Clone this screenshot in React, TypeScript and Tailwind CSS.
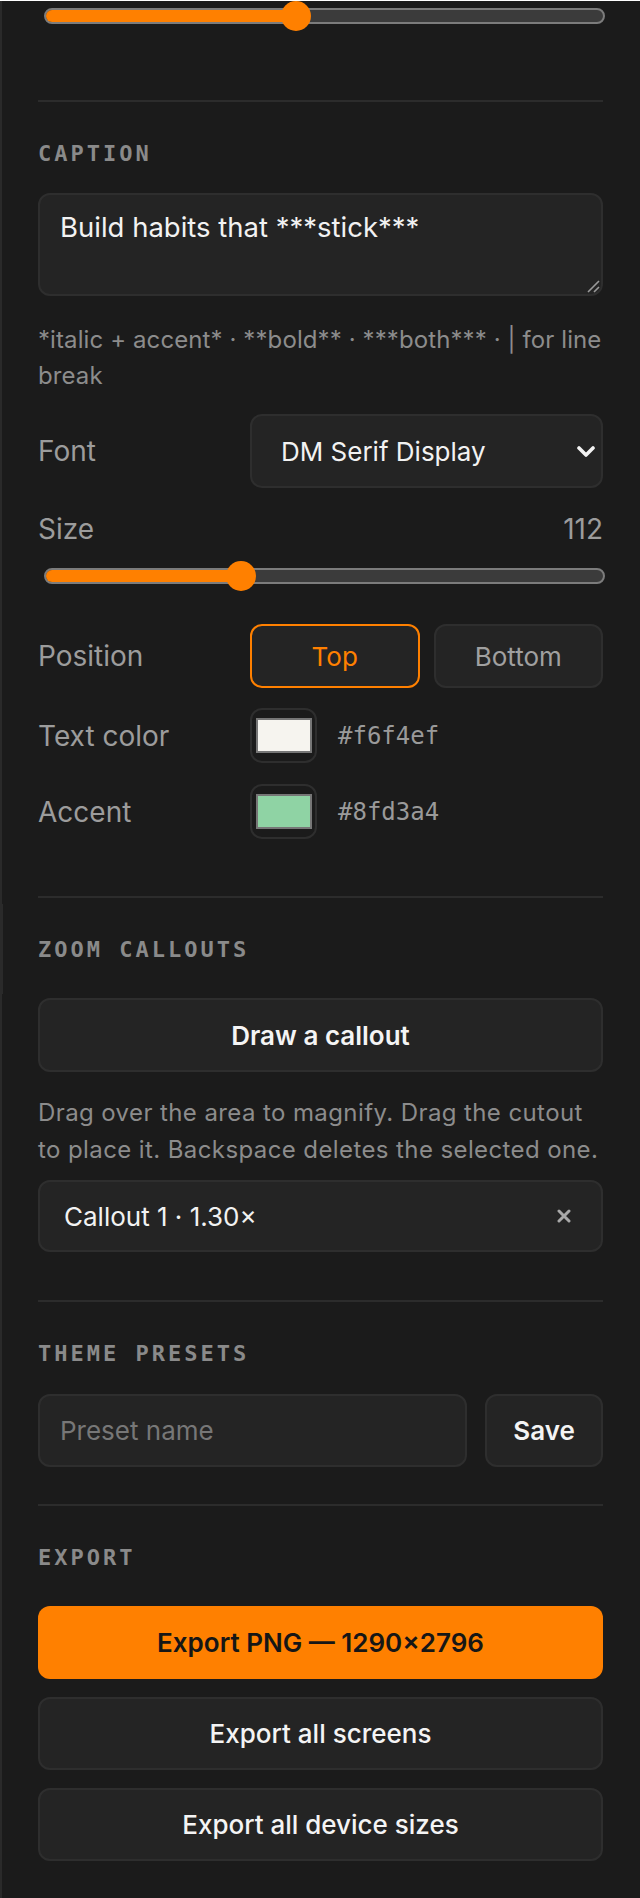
import { useState } from "react";

// Editor sidebar: caption, zoom callouts, presets and export controls
const sans = "font-['Inter','Noto_Sans',sans-serif]";
const mono = "font-['DejaVu_Sans_Mono','Liberation_Mono',monospace]";

function Divider({ className = "" }: { className?: string }) {
    return <div className={`h-[2px] bg-[#2c2c2c] ${className}`} />;
}

function SectionTitle({ children }: { children: React.ReactNode }) {
    return (
        <h3 className={`${mono} mt-[41px] text-[22px] font-bold uppercase leading-[22px] tracking-[3px] text-[#8a8a8a]`}>
            {children}
        </h3>
    );
}

function Slider({ value, min, max, className = "" }: { value: number; min: number; max: number; className?: string }) {
    // thumb is 30px, track runs 561px wide
    const frac = (value - min) / (max - min);
    const center = 15 + frac * (561 - 30);
    return (
        <div className={`relative ml-[6px] mr-[-2px] flex h-[30px] items-center ${className}`}>
            <div className="relative h-[16px] w-full overflow-hidden rounded-full border-2 border-[#7c7c7c] bg-[#3b3b3b]">
                <div className="h-full bg-[#ff8000]" style={{ width: center }} />
            </div>
            <div
                className="absolute top-0 h-[30px] w-[30px] rounded-full bg-[#ff8000]"
                style={{ left: center - 15 }}
            />
        </div>
    );
}

function Swatch({ label, color, className = "" }: { label: string; color: string; className?: string }) {
    return (
        <div className={`grid grid-cols-[212px_1fr] items-center ${className}`}>
            <span className="text-[28px] text-[#9c9c9c]">{label}</span>
            <div className="flex items-center gap-[21px]">
                <div className="h-[55px] w-[67px] rounded-[12px] border-2 border-[#2e2e2e] px-[4px] pt-[8px]">
                    <div className="h-[35px] w-[56px] border-2 border-[#767676]" style={{ background: color }} />
                </div>
                <span className={`${mono} text-[24px] text-[#9a9a9a]`}>{color}</span>
            </div>
        </div>
    );
}

export default function App() {
    const [caption, setCaption] = useState("Build habits that ***stick***");
    const [position, setPosition] = useState<"top" | "bottom">("top");
    const [presetName, setPresetName] = useState("");

    return (
        <div className={`${sans} relative min-h-[1898px] w-[640px] border-l-2 border-[#2a2a2a] bg-[#1b1b1b] pl-[36px] pr-[37px] pb-[36px]`}>
            {/* resize handle on the panel edge */}
            <div className="absolute left-[-2px] top-[903px] h-[90px] w-[3px] bg-[#2a2a2a]" />

            <Slider value={44.6} min={0} max={100} className="mt-px" />
            <Divider className="mt-[69px]" />

            {/* Caption */}
            <section>
                <SectionTitle>Caption</SectionTitle>
                <div className="relative mt-[28px]">
                    <textarea
                        value={caption}
                        onChange={(e) => setCaption(e.target.value)}
                        className="block h-[103px] w-full resize-none rounded-[12px] border-2 border-[#2e2e2e] bg-[#242424] px-[20px] pt-[14px] text-[27.5px] leading-[36px] text-[#f2f2f2] outline-none"
                    />
                    <svg className="absolute bottom-[3px] right-[3px]" width="14" height="14" viewBox="0 0 14 14">
                        <path d="M13 2 L2 13 M13 8 L8 13" stroke="#9a9a9a" strokeWidth="1.6" />
                    </svg>
                </div>
                <p className="mt-[26px] text-[24px] leading-[36px] tracking-[0.1px] text-[#8c8c8c]">
                    *italic + accent* · **bold** · ***both*** · | for line break
                </p>

                <div className="mt-[20px] grid grid-cols-[212px_1fr] items-center">
                    <span className="text-[28px] text-[#9c9c9c]">Font</span>
                    <div className="flex h-[74px] items-center justify-between rounded-[12px] border-2 border-[#2e2e2e] bg-[#242424] pl-[29px] pr-[6px]">
                        <span className="text-[26px] text-[#f2f2f2]">DM Serif Display</span>
                        <svg width="18" height="11" viewBox="0 0 18 11">
                            <path d="M2 2 L9 9 L16 2" stroke="#f2f2f2" strokeWidth="3.6" fill="none" strokeLinecap="round" strokeLinejoin="round" />
                        </svg>
                    </div>
                </div>

                <div className="mt-[24px] flex justify-between text-[28px] leading-[34px] text-[#9c9c9c]">
                    <span>Size</span>
                    <span>112</span>
                </div>
                <Slider value={112} min={40} max={250} className="mt-[15px]" />

                <div className="mt-[33px] grid grid-cols-[212px_1fr] items-center">
                    <span className="text-[28px] text-[#9c9c9c]">Position</span>
                    <div className="grid grid-cols-2 gap-[14px]">
                        <button
                            onClick={() => setPosition("top")}
                            className={
                                position === "top"
                                    ? "h-[64px] rounded-[12px] border-2 border-[#ff8000] bg-[#242424] text-[26px] text-[#ff8000]"
                                    : "h-[64px] rounded-[12px] border-2 border-[#2e2e2e] bg-[#242424] text-[26px] text-[#a0a0a0]"
                            }
                        >
                            Top
                        </button>
                        <button
                            onClick={() => setPosition("bottom")}
                            className={
                                position === "bottom"
                                    ? "h-[64px] rounded-[12px] border-2 border-[#ff8000] bg-[#242424] text-[26px] text-[#ff8000]"
                                    : "h-[64px] rounded-[12px] border-2 border-[#2e2e2e] bg-[#242424] text-[26px] text-[#a0a0a0]"
                            }
                        >
                            Bottom
                        </button>
                    </div>
                </div>

                <Swatch label="Text color" color="#f6f4ef" className="mt-[20px]" />
                <Swatch label="Accent" color="#8fd3a4" className="mt-[21px]" />
            </section>

            <Divider className="mt-[57px]" />

            {/* Zoom callouts */}
            <section>
                <SectionTitle>Zoom callouts</SectionTitle>
                <button className="mt-[37px] h-[74px] w-full rounded-[12px] border-2 border-[#2e2e2e] bg-[#242424] text-[26px] font-semibold text-[#f4f4f4]">
                    Draw a callout
                </button>
                <p className="mt-[23px] text-[24px] leading-[36.5px] tracking-[0.4px] text-[#8c8c8c]">
                    Drag over the area to magnify. Drag the cutout to place it. Backspace deletes the selected one.
                </p>
                <div className="mt-[12px] flex h-[72px] items-center justify-between rounded-[12px] border-2 border-[#2e2e2e] bg-[#242424] pl-[24px] pr-[30px]">
                    <span className="text-[26px] text-[#f2f2f2]">Callout 1 · 1.30×</span>
                    <svg width="14" height="14" viewBox="0 0 14 14">
                        <path d="M2 2 L12 12 M12 2 L2 12" stroke="#a8a8a8" strokeWidth="3" strokeLinecap="round" />
                    </svg>
                </div>
            </section>

            <Divider className="mt-[48px]" />

            {/* Theme presets */}
            <section>
                <SectionTitle>Theme presets</SectionTitle>
                <div className="mt-[29px] flex gap-[18px]">
                    <input
                        value={presetName}
                        onChange={(e) => setPresetName(e.target.value)}
                        placeholder="Preset name"
                        className="h-[73px] min-w-0 flex-1 rounded-[12px] border-2 border-[#2e2e2e] bg-[#242424] px-[20px] text-[26px] text-[#f2f2f2] outline-none placeholder:text-[#777777]"
                    />
                    <button className="h-[73px] w-[118px] rounded-[12px] border-2 border-[#2e2e2e] bg-[#242424] text-[26px] font-semibold text-[#f4f4f4]">
                        Save
                    </button>
                </div>
            </section>

            <Divider className="mt-[37px]" />

            {/* Export */}
            <section>
                <SectionTitle>Export</SectionTitle>
                <div className="mt-[37px] flex flex-col gap-[18px]">
                    <button className="h-[73px] rounded-[12px] bg-[#ff8000] text-[26px] font-semibold text-[#161616]">
                        Export PNG — 1290×2796
                    </button>
                    <button className="h-[73px] rounded-[12px] border-2 border-[#2e2e2e] bg-[#242424] text-[26px] font-medium text-[#f4f4f4]">
                        Export all screens
                    </button>
                    <button className="h-[73px] rounded-[12px] border-2 border-[#2e2e2e] bg-[#242424] text-[26px] font-medium text-[#f4f4f4]">
                        Export all device sizes
                    </button>
                </div>
            </section>
        </div>
    );
}
